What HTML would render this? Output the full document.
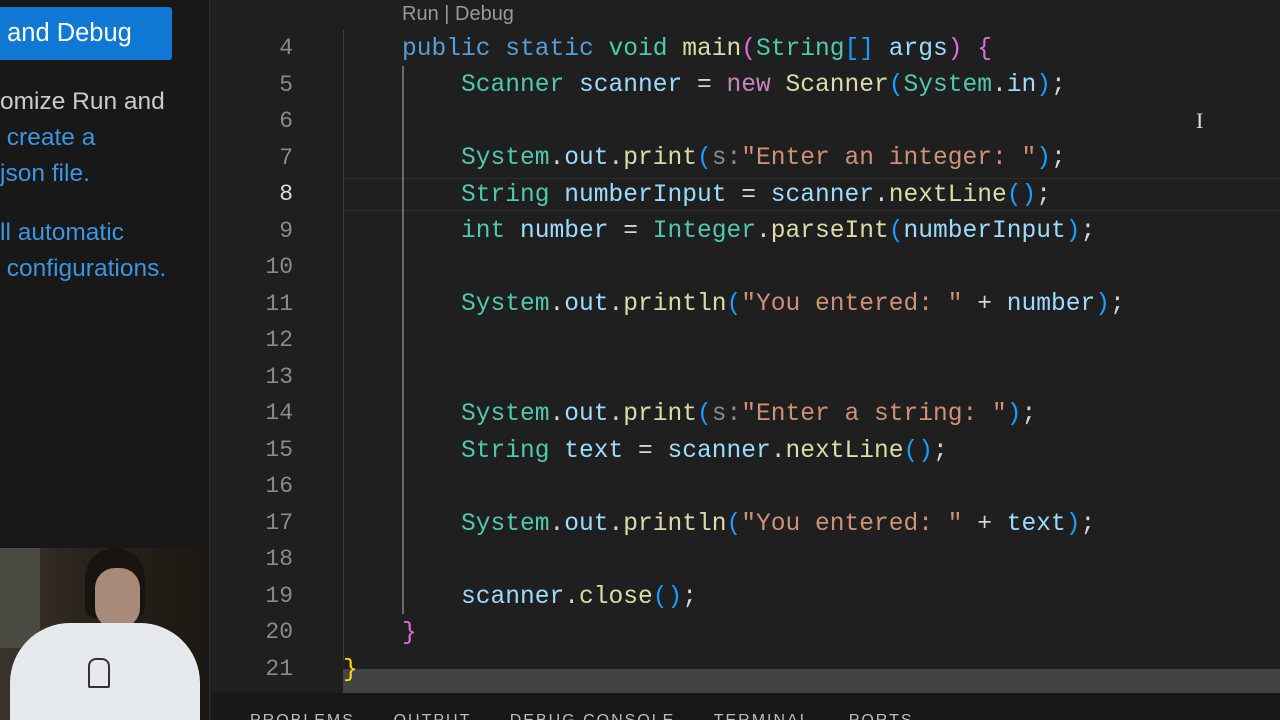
<!DOCTYPE html>
<html><head><meta charset="utf-8"><style>
*{margin:0;padding:0;box-sizing:border-box}
html,body{width:1280px;height:720px;overflow:hidden}
body{background:#1f1f1f;position:relative;font-family:"Liberation Sans",sans-serif}
.side{position:absolute;left:0;top:0;width:210px;height:720px;background:#181818;border-right:1px solid #2b2b2b}
.btn{position:absolute;left:0;top:7px;width:172px;height:53px;background:#0f78d4;border-radius:0 3px 3px 0;color:#fff;font-size:25.5px;line-height:53px;white-space:nowrap;overflow:hidden}
.st{position:absolute;left:0;font-size:24.5px;color:#ccc;white-space:nowrap}
.lk{color:#3d94e0}
.cam{position:absolute;left:0;top:548px;width:205px;height:172px;background:linear-gradient(90deg,#3a352c 0,#2a241c 40%,#1c1812 100%);overflow:hidden}
.ln{position:absolute;left:220px;width:73px;text-align:right;font-family:"Liberation Mono",monospace;font-size:23px;color:#8a8a8a}
.code{position:absolute;left:343px;font-family:"Liberation Mono",monospace;font-size:24.58px;white-space:pre;color:#d4d4d4;margin-top:3px}
.k{color:#569cd6}.t{color:#4ec9b0}.v{color:#9cdcfe}.f{color:#dcdcaa}.s{color:#ce9178}.p{color:#c586c0}.b1{color:#da70d6}.b2{color:#179fff}.b0{color:#ffd700}.h{color:#8a8a8a}
</style></head><body>
<div class="side">
<div class="btn">&nbsp;and Debug</div>
<div class="st" style="top:88px">omize Run and</div>
<div class="st lk" style="top:124px">&nbsp;create a</div>
<div class="st lk" style="top:160px">json file.</div>
<div class="st lk" style="top:219px">ll automatic</div>
<div class="st lk" style="top:255px">&nbsp;configurations.</div>
</div>
<div class="cam">
<div style="position:absolute;left:0;top:0;width:40px;height:100px;background:#4a4a40"></div>
<div style="position:absolute;left:85px;top:0;width:60px;height:70px;background:#1a1410;border-radius:30px 30px 10px 10px"></div>
<div style="position:absolute;left:95px;top:20px;width:45px;height:60px;background:#a88a78;border-radius:20px"></div>
<div style="position:absolute;left:10px;top:75px;width:190px;height:110px;background:#e6e9ec;border-radius:60px 60px 0 0"></div>
<div style="position:absolute;left:88px;top:110px;width:22px;height:30px;border:2px solid #333;border-radius:8px 8px 2px 2px"></div>
</div>
<div style="position:absolute;left:343px;top:178px;width:937px;height:33px;border-top:1px solid #2e2e2e;border-bottom:1px solid #2e2e2e"></div>
<div style="position:absolute;left:343px;top:30px;width:1px;height:630px;background:#3a3a3a"></div>
<div style="position:absolute;left:402px;top:66px;width:2px;height:548px;background:#6a6a6a"></div>
<div style="position:absolute;left:343px;top:669px;width:937px;height:24px;background:#434343"></div>
<div style="position:absolute;left:211px;top:693px;width:1069px;height:27px;background:#181818;overflow:hidden">
<div style="position:absolute;left:39px;top:19px;font-size:16px;color:#bbb;letter-spacing:2px;white-space:pre">PROBLEMS      OUTPUT      DEBUG CONSOLE      TERMINAL      PORTS</div></div>
<div style="position:absolute;left:402px;top:3px;font-size:20px;color:#999">Run | Debug</div>
<div class="ln" style="top:35px">4</div><div class="ln" style="top:72px">5</div><div class="ln" style="top:108px">6</div><div class="ln" style="top:145px">7</div><div class="ln" style="top:181px;color:#ddd">8</div><div class="ln" style="top:218px">9</div><div class="ln" style="top:254px">10</div><div class="ln" style="top:291px">11</div><div class="ln" style="top:327px">12</div><div class="ln" style="top:364px">13</div><div class="ln" style="top:400px">14</div><div class="ln" style="top:437px">15</div><div class="ln" style="top:473px">16</div><div class="ln" style="top:510px">17</div><div class="ln" style="top:546px">18</div><div class="ln" style="top:583px">19</div><div class="ln" style="top:619px">20</div><div class="ln" style="top:656px">21</div>
<div class="code" style="top:33px">    <span class="k">public</span> <span class="k">static</span> <span class="t">void</span> <span class="f">main</span><span class="b1">(</span><span class="t">String</span><span class="b2">[]</span> <span class="v">args</span><span class="b1">)</span> <span class="b1">{</span></div>
<div class="code" style="top:69px">        <span class="t">Scanner</span> <span class="v">scanner</span> = <span class="p">new</span> <span class="f">Scanner</span><span class="b2">(</span><span class="t">System</span>.<span class="v">in</span><span class="b2">)</span>;</div>
<div class="code" style="top:142px">        <span class="t">System</span>.<span class="v">out</span>.<span class="f">print</span><span class="b2">(</span><span class="h">s:</span><span class="s">"Enter an integer: "</span><span class="b2">)</span>;</div>
<div class="code" style="top:179px">        <span class="t">String</span> <span class="v">numberInput</span> = <span class="v">scanner</span>.<span class="f">nextLine</span><span class="b2">()</span>;</div>
<div class="code" style="top:215px">        <span class="t">int</span> <span class="v">number</span> = <span class="t">Integer</span>.<span class="f">parseInt</span><span class="b2">(</span><span class="v">numberInput</span><span class="b2">)</span>;</div>
<div class="code" style="top:288px">        <span class="t">System</span>.<span class="v">out</span>.<span class="f">println</span><span class="b2">(</span><span class="s">"You entered: "</span> + <span class="v">number</span><span class="b2">)</span>;</div>
<div class="code" style="top:398px">        <span class="t">System</span>.<span class="v">out</span>.<span class="f">print</span><span class="b2">(</span><span class="h">s:</span><span class="s">"Enter a string: "</span><span class="b2">)</span>;</div>
<div class="code" style="top:435px">        <span class="t">String</span> <span class="v">text</span> = <span class="v">scanner</span>.<span class="f">nextLine</span><span class="b2">()</span>;</div>
<div class="code" style="top:508px">        <span class="t">System</span>.<span class="v">out</span>.<span class="f">println</span><span class="b2">(</span><span class="s">"You entered: "</span> + <span class="v">text</span><span class="b2">)</span>;</div>
<div class="code" style="top:581px">        <span class="v">scanner</span>.<span class="f">close</span><span class="b2">()</span>;</div>
<div class="code" style="top:617px">    <span class="b1">}</span></div>
<div class="code" style="top:654px"><span class="b0">}</span></div>
<div style="position:absolute;left:1196px;top:108px;font-size:22px;color:#ddd;font-family:'Liberation Serif',serif">I</div>
</body></html>
